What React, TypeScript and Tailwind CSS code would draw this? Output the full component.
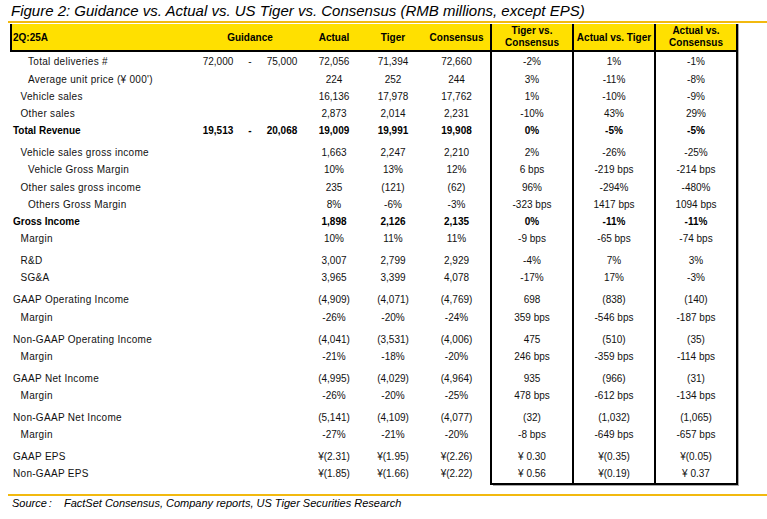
import * as React from 'react';

type Row = {
  label: string;
  level: 0 | 1 | 2;
  bold?: boolean;
  gap?: boolean;
  guide?: [string, string];
  a: string;
  t: string;
  c: string;
  tc: string;
  at: string;
  ac: string;
};

const rows: Row[] = [
  { label: 'Total deliveries #', level: 2, guide: ['72,000', '75,000'], a: '72,056', t: '71,394', c: '72,660', tc: '-2%', at: '1%', ac: '-1%' },
  { label: "Average unit price (¥ 000')", level: 2, a: '224', t: '252', c: '244', tc: '3%', at: '-11%', ac: '-8%' },
  { label: 'Vehicle sales', level: 1, a: '16,136', t: '17,978', c: '17,762', tc: '1%', at: '-10%', ac: '-9%' },
  { label: 'Other sales', level: 1, a: '2,873', t: '2,014', c: '2,231', tc: '-10%', at: '43%', ac: '29%' },
  { label: 'Total Revenue', level: 0, bold: true, guide: ['19,513', '20,068'], a: '19,009', t: '19,991', c: '19,908', tc: '0%', at: '-5%', ac: '-5%' },
  { label: 'Vehicle sales gross income', level: 1, gap: true, a: '1,663', t: '2,247', c: '2,210', tc: '2%', at: '-26%', ac: '-25%' },
  { label: 'Vehicle Gross Margin', level: 2, a: '10%', t: '13%', c: '12%', tc: '6 bps', at: '-219 bps', ac: '-214 bps' },
  { label: 'Other sales gross income', level: 1, a: '235', t: '(121)', c: '(62)', tc: '96%', at: '-294%', ac: '-480%' },
  { label: 'Others Gross Margin', level: 2, a: '8%', t: '-6%', c: '-3%', tc: '-323 bps', at: '1417 bps', ac: '1094 bps' },
  { label: 'Gross Income', level: 0, bold: true, a: '1,898', t: '2,126', c: '2,135', tc: '0%', at: '-11%', ac: '-11%' },
  { label: 'Margin', level: 1, a: '10%', t: '11%', c: '11%', tc: '-9 bps', at: '-65 bps', ac: '-74 bps' },
  { label: 'R&D', level: 1, gap: true, a: '3,007', t: '2,799', c: '2,929', tc: '-4%', at: '7%', ac: '3%' },
  { label: 'SG&A', level: 1, a: '3,965', t: '3,399', c: '4,078', tc: '-17%', at: '17%', ac: '-3%' },
  { label: 'GAAP Operating Income', level: 0, gap: true, a: '(4,909)', t: '(4,071)', c: '(4,769)', tc: '698', at: '(838)', ac: '(140)' },
  { label: 'Margin', level: 1, a: '-26%', t: '-20%', c: '-24%', tc: '359 bps', at: '-546 bps', ac: '-187 bps' },
  { label: 'Non-GAAP Operating Income', level: 0, gap: true, a: '(4,041)', t: '(3,531)', c: '(4,006)', tc: '475', at: '(510)', ac: '(35)' },
  { label: 'Margin', level: 1, a: '-21%', t: '-18%', c: '-20%', tc: '246 bps', at: '-359 bps', ac: '-114 bps' },
  { label: 'GAAP Net Income', level: 0, gap: true, a: '(4,995)', t: '(4,029)', c: '(4,964)', tc: '935', at: '(966)', ac: '(31)' },
  { label: 'Margin', level: 1, a: '-26%', t: '-20%', c: '-25%', tc: '478 bps', at: '-612 bps', ac: '-134 bps' },
  { label: 'Non-GAAP Net Income', level: 0, gap: true, a: '(5,141)', t: '(4,109)', c: '(4,077)', tc: '(32)', at: '(1,032)', ac: '(1,065)' },
  { label: 'Margin', level: 1, a: '-27%', t: '-21%', c: '-20%', tc: '-8 bps', at: '-649 bps', ac: '-657 bps' },
  { label: 'GAAP EPS', level: 0, gap: true, a: '¥(2.31)', t: '¥(1.95)', c: '¥(2.26)', tc: '¥ 0.30', at: '¥(0.35)', ac: '¥(0.05)' },
  { label: 'Non-GAAP EPS', level: 0, a: '¥(1.85)', t: '¥(1.66)', c: '¥(2.22)', tc: '¥ 0.56', at: '¥(0.19)', ac: '¥ 0.37' },
];

const indent = ['pl-[3px]', 'pl-[10.5px]', 'pl-[18px]'];

function TableRow({ row, first, last }: { row: Row; first: boolean; last: boolean }) {
  const pad = row.gap ? 'pt-[4.8px]' : first ? 'pt-[1.4px]' : '';
  const cell = `${pad} leading-[17.2px] text-center whitespace-nowrap`;
  const box = `${cell} w-[82px] border-l-2 border-black ${last ? 'border-b-2' : ''}`;
  const weight = row.bold ? 'font-bold text-black' : '';
  return (
    <div className={`flex text-[10px] ${weight}`}>
      <div className={`${pad} leading-[17.2px] w-[185px] ${indent[row.level]} ${row.bold ? '' : 'tracking-[0.3px]'} whitespace-nowrap`}>
        {row.label}
      </div>
      <div className={`${cell} w-[46px]`}>{row.guide ? row.guide[0] : ''}</div>
      <div className={`${cell} w-[18px]`}>{row.guide ? '-' : ''}</div>
      <div className={`${cell} w-[46px]`}>{row.guide ? row.guide[1] : ''}</div>
      <div className={`${cell} w-[58px]`}>{row.a}</div>
      <div className={`${cell} w-[60px]`}>{row.t}</div>
      <div className={`${cell} w-[67px]`}>{row.c}</div>
      <div className={box}>{row.tc}</div>
      <div className={box}>{row.at}</div>
      <div className={`${box} w-[84px] border-r-2`}>{row.ac}</div>
      <div className={`w-[1px] bg-[#a8a8a8] ${last ? 'mb-[-1px]' : ''}`} />
    </div>
  );
}

export default function App() {
  return (
    <div className="w-[767px] h-[519px] bg-white pl-[8px] font-['Liberation_Sans',Arial,sans-serif] text-[#111] overflow-hidden">
      <div className="h-[21px] pt-[2px] pl-[3px] text-[15px] italic leading-[17px] whitespace-nowrap text-black">
        Figure 2: Guidance vs. Actual vs. US Tiger vs. Consensus (RMB millions, except EPS)
      </div>
      <div className="h-[1.5px] bg-[#f2b90f]" />
      <div className="h-[1.5px]" />

      <div className="ml-[2px]">
        <div className="flex h-[28px] text-[10px] font-bold text-black">
          <div className="flex w-[728px] bg-[#ffe000] border-b-2 border-black">
            <div className="w-[185px] border-l-2 border-black pl-[1px] flex items-center">2Q:25A</div>
            <div className="w-[110px] flex items-center justify-center">Guidance</div>
            <div className="w-[58px] flex items-center justify-center">Actual</div>
            <div className="w-[60px] flex items-center justify-center">Tiger</div>
            <div className="w-[67px] flex items-center justify-center">Consensus</div>
            <div className="w-[82px] border-l-2 border-black flex flex-col items-center justify-center leading-[12px] text-center">
              <span>Tiger vs.</span>
              <span>Consensus</span>
            </div>
            <div className="w-[82px] border-l-2 border-black flex items-center justify-center whitespace-nowrap">Actual vs. Tiger</div>
            <div className="w-[84px] border-l-2 border-r-2 border-black flex flex-col items-center justify-center leading-[12px] text-center">
              <span>Actual vs.</span>
              <span>Consensus</span>
            </div>
          </div>
          <div className="w-[1px] bg-[#a8a8a8]" />
        </div>

        {rows.map((row, i) => (
          <TableRow key={i} row={row} first={i === 0} last={i === rows.length - 1} />
        ))}
        <div className="flex">
          <div className="w-[483px]" />
          <div className="w-[246px] h-[1px] bg-[#a8a8a8]" />
        </div>
      </div>

      <div className="mt-[8.5px] h-[1.5px] bg-[#f2b90f]" />
      <div className="pt-[1px] pl-[4px] text-[11px] italic leading-[13px] whitespace-nowrap text-black">
        <span>Source</span>
        <span className="ml-[2px]">:</span>
        <span className="ml-[12px]">FactSet Consensus, Company reports, US Tiger Securities Research</span>
      </div>
    </div>
  );
}
